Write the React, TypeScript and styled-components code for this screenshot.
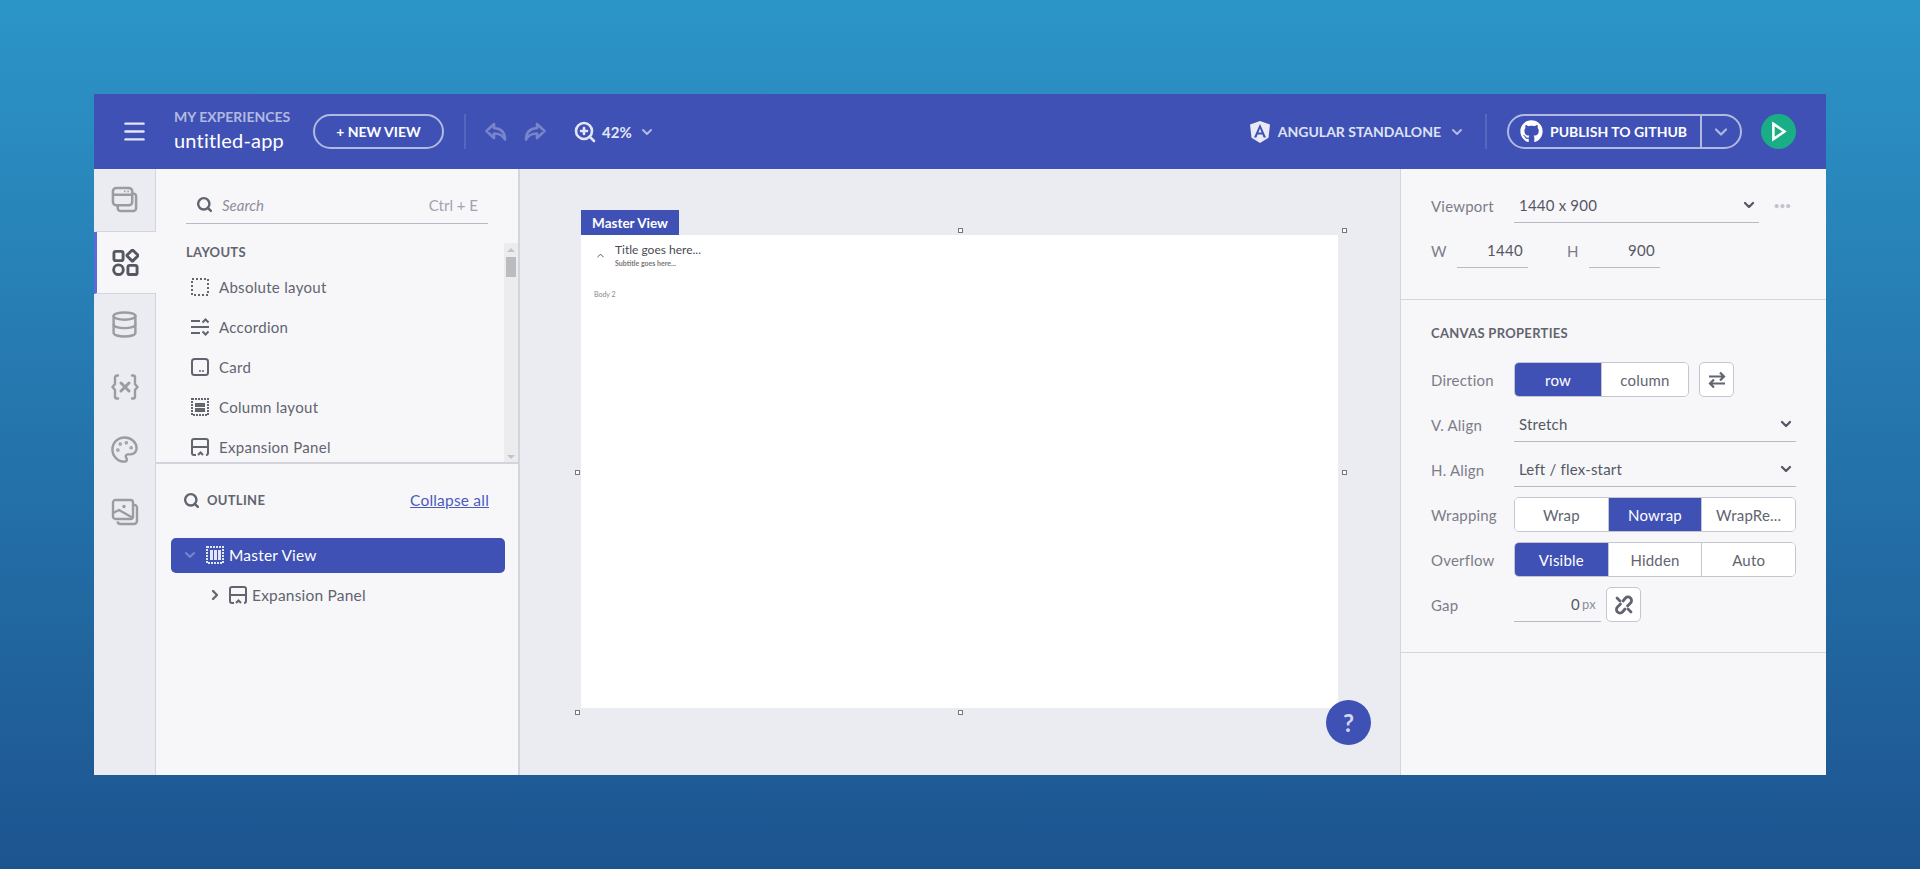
import React from 'react'
import styled, { createGlobalStyle } from 'styled-components'
import {
  ChevronDown,
  ChevronRight,
  ChevronUp,
  Database,
  Menu,
  Palette,
  Search,
  ZoomIn,
} from 'lucide-react'
import { FaGithub } from 'react-icons/fa'

const GlobalStyle = createGlobalStyle`
  html, body {
    margin: 0;
    padding: 0;
  }
  * {
    box-sizing: border-box;
  }
  body {
    font-family: 'Lato', 'Open Sans', sans-serif;
    color: #62646f;
  }
`

const Page = styled.div`
  width: 1920px;
  height: 869px;
  padding: 94px 94px 94px 94px;
  overflow: hidden;
  background: linear-gradient(180deg, #2c95c8 0%, #1d5490 100%);
`

const Window = styled.div`
  width: 1732px;
  height: 681px;
  display: flex;
  flex-direction: column;
`

const TopBar = styled.header`
  height: 75px;
  flex: none;
  display: flex;
  align-items: center;
  background: #3f51b5;
  color: #fff;
`

const MenuButton = styled.div`
  width: 80px;
  display: flex;
  justify-content: center;
  color: #e3e6f5;
`

const Project = styled.div`
  width: 139px;
  display: flex;
  flex-direction: column;
  gap: 2px;
  margin-top: -3px;
`

const ProjectLabel = styled.span`
  font-size: 14px;
  line-height: 18px;
  font-weight: 700;
  color: #b2b9e1;
`

const ProjectName = styled.span`
  font-size: 20px;
  line-height: 24px;
  letter-spacing: 0.2px;
`

const OutlineButton = styled.div`
  width: 131px;
  height: 35px;
  border: 2px solid #b2b9e1;
  border-radius: 18px;
  display: flex;
  align-items: center;
  justify-content: center;
  font-size: 14px;
  font-weight: 700;
`

const Divider = styled.div<{ $gap: number }>`
  width: 2px;
  height: 35px;
  margin: 0 ${p => p.$gap}px;
  background: #5766bd;
`

const HistoryIcons = styled.div`
  width: 63px;
  margin-left: -2px;
  display: flex;
  justify-content: space-between;
  color: #7885cb;
`

const Zoom = styled.div`
  margin-left: 26px;
  display: flex;
  align-items: center;
  gap: 5px;
  font-size: 15px;
  font-weight: 700;
  color: #e3e6f5;
`

const TopRight = styled.div`
  margin-left: auto;
  display: flex;
  align-items: center;
`

const Framework = styled.div`
  display: flex;
  align-items: center;
  gap: 8px;
  font-size: 14px;
  font-weight: 700;
  color: #dfe2f3;
`

const PublishButton = styled.div`
  width: 235px;
  height: 35px;
  border: 2px solid #b2b9e1;
  border-radius: 18px;
  display: flex;
  align-items: center;
  font-size: 14px;
  font-weight: 700;
`

const PublishLabel = styled.div`
  flex: 1;
  height: 100%;
  padding-left: 11px;
  display: flex;
  align-items: center;
  gap: 7px;
  border-right: 2px solid #b2b9e1;
`

const PublishCaret = styled.div`
  width: 38px;
  display: flex;
  justify-content: center;
  color: #b2b9e1;
`

const RunButton = styled.div`
  width: 35px;
  height: 35px;
  margin: 0 30px 0 19px;
  border-radius: 50%;
  background: #19ae85;
  display: flex;
  align-items: center;
  justify-content: center;
  color: #fff;
`

const Body = styled.div`
  flex: 1;
  min-height: 0;
  display: flex;
`

const Rail = styled.nav`
  width: 62px;
  flex: none;
  background: #ebecf1;
  border-right: 1px solid #d4d5dc;
`

const RailTab = styled.div<{ $active?: boolean; $underline?: boolean }>`
  height: 62.5px;
  display: flex;
  align-items: center;
  justify-content: center;
  color: ${p => (p.$active ? '#555763' : '#9a9ba3')};
  background: ${p => (p.$active ? '#f7f7fa' : 'transparent')};
  border-left: 3px solid ${p => (p.$active ? '#5a6bd8' : 'transparent')};
  border-bottom: 1px solid ${p => (p.$underline ? '#d4d5dc' : 'transparent')};
  margin-right: ${p => (p.$active ? '-1px' : '0')};
  padding-right: 3px;
`

const LeftPanel = styled.aside`
  width: 364px;
  flex: none;
  display: flex;
  flex-direction: column;
  background: #f7f7fa;
  border-right: 2px solid #d4d5dc;
`

const Palettes = styled.section`
  height: 295px;
  flex: none;
  overflow: hidden;
  border-bottom: 2px solid #d4d5dc;
`

const SearchBox = styled.div`
  height: 38px;
  margin: 17px 30px 0 30px;
  padding: 0 10px;
  display: flex;
  align-items: center;
  gap: 9px;
  border-bottom: 1px solid #b9bac5;
  color: #62646f;
`

const SearchText = styled.span`
  flex: 1;
  font-size: 15px;
  font-style: italic;
  color: #8d8e9c;
`

const Shortcut = styled.span`
  font-size: 15px;
  color: #a1a2ad;
`

const PaletteBody = styled.div`
  display: flex;
  height: 240px;
`

const PaletteList = styled.div`
  flex: 1;
  padding: 19px 0 0 30px;
`

const SectionTitle = styled.div`
  font-size: 13px;
  line-height: 18px;
  font-weight: 700;
  letter-spacing: 0.3px;
  color: #62646f;
`

const ListTitle = styled(SectionTitle)`
  margin-bottom: 6px;
`

const PaletteItem = styled.div`
  height: 40px;
  margin-left: 5px;
  display: flex;
  align-items: center;
  gap: 10px;
  font-size: 15px;
  letter-spacing: 0.3px;
  color: #62646f;
`

const ScrollTrack = styled.div`
  position: relative;
  width: 14px;
  margin-top: 19px;
  background: #ececee;
  &::before,
  &::after {
    content: '';
    position: absolute;
    left: 3px;
    border-left: 4px solid transparent;
    border-right: 4px solid transparent;
  }
  &::before {
    top: 5px;
    border-bottom: 4px solid #c4c4c8;
  }
  &::after {
    bottom: 5px;
    border-top: 4px solid #c4c4c8;
  }
`

const ScrollThumb = styled.div`
  position: absolute;
  top: 14px;
  left: 2px;
  width: 10px;
  height: 20px;
  background: #bcbcc0;
`

const OutlineSection = styled.section`
  flex: 1;
  padding: 25px 13px 0 15px;
`

const OutlineHeader = styled.div`
  display: flex;
  align-items: center;
  padding: 0 16px 0 12px;
  height: 22px;
  gap: 7px;
  margin-bottom: 27px;
`

const OutlineTitle = styled(SectionTitle)`
  flex: 1;
`

const CollapseLink = styled.a`
  font-size: 15.5px;
  letter-spacing: 0.2px;
  color: #4a5bbb;
  text-decoration: underline;
`

const TreeRow = styled.div<{ $selected?: boolean; $indent: number }>`
  height: 35px;
  margin-bottom: 5px;
  padding-left: ${p => p.$indent}px;
  padding-bottom: 2px;
  display: flex;
  align-items: center;
  gap: 5px;
  border-radius: 5px;
  font-size: 15.5px;
  letter-spacing: 0.2px;
  background: ${p => (p.$selected ? '#3f51b5' : 'transparent')};
  color: ${p => (p.$selected ? '#fff' : '#62646f')};
`

const Workspace = styled.main`
  position: relative;
  flex: 1;
  background: #ebecf1;
  padding: 41px 0 0 61px;
`

const CanvasTab = styled.div`
  width: 98px;
  height: 25px;
  background: #3f51b5;
  color: #fff;
  font-size: 13.5px;
  font-weight: 700;
  display: flex;
  align-items: center;
  justify-content: center;
`

const Canvas = styled.div`
  position: relative;
  width: 757px;
  height: 473px;
  background: #fff;
`

const Handle = styled.span<{ $x: string; $y: string }>`
  position: absolute;
  left: ${p => p.$x};
  top: ${p => p.$y};
  width: 5px;
  height: 5px;
  margin: -2.5px 0 0 -2.5px;
  background: #fff;
  border: 1px solid #777;
`

const PanelHeader = styled.div`
  display: flex;
  align-items: center;
  padding: 7px 0 0 14px;
  gap: 9px;
  color: #444;
`

const PanelTitle = styled.div`
  font-size: 12px;
  line-height: 16px;
  color: #4a4a55;
`

const PanelSubtitle = styled.div`
  font-size: 7px;
  line-height: 10px;
  font-weight: 700;
  color: #777;
`

const PanelBody = styled.div`
  margin: 22px 0 0 13px;
  font-size: 7px;
  color: #888;
`

const HelpButton = styled.div`
  position: absolute;
  left: 806px;
  bottom: 30px;
  width: 45px;
  height: 45px;
  border-radius: 50%;
  background: #3f51b5;
  color: #d5d9f0;
  display: flex;
  align-items: center;
  justify-content: center;
  font-size: 24px;
  font-weight: 700;
`

const RightPanel = styled.aside`
  width: 426px;
  flex: none;
  background: #f7f7fa;
  border-left: 1px solid #d4d5dc;
`

const ViewportSection = styled.section`
  height: 131px;
  padding: 19px 30px 0 30px;
  border-bottom: 1px solid #d4d5dc;
`

const PropertySection = styled.section`
  height: 353px;
  padding: 24px 30px 0 30px;
  border-bottom: 1px solid #d4d5dc;
`

const PropRow = styled.div<{ $mb?: number }>`
  height: 35px;
  display: flex;
  align-items: center;
  margin-bottom: ${p => p.$mb ?? 10}px;
`

const PropLabel = styled.span<{ $w?: number }>`
  width: ${p => p.$w ?? 83}px;
  flex: none;
  font-size: 15px;
  letter-spacing: 0.2px;
  color: #7c7d89;
`

const SelectBox = styled.div<{ $w: number }>`
  width: ${p => p.$w}px;
  height: 35px;
  padding: 0 2px 0 5px;
  display: flex;
  align-items: center;
  justify-content: space-between;
  border-bottom: 1px solid #b9bac5;
  font-size: 15px;
  letter-spacing: 0.2px;
  color: #555763;
`

const Dots = styled.span`
  margin-left: 15px;
  font-size: 9px;
  line-height: 10px;
  letter-spacing: 0.5px;
  font-weight: 700;
  color: #c2c3cb;
`

const NumberBox = styled.div<{ $w: number; $mr?: number }>`
  width: ${p => p.$w}px;
  height: 35px;
  margin-right: ${p => p.$mr ?? 0}px;
  padding-right: 5px;
  display: flex;
  align-items: center;
  justify-content: flex-end;
  border-bottom: 1px solid #b9bac5;
  font-size: 15px;
  letter-spacing: 0.3px;
  color: #555763;
`

const Unit = styled.span`
  margin-left: 2px;
  font-size: 13px;
  color: #8d8e9c;
`

const SectionHeading = styled(SectionTitle)`
  margin-bottom: 20px;
`

const Segments = styled.div<{ $w: number }>`
  width: ${p => p.$w}px;
  height: 35px;
  display: flex;
  background: #fff;
  border: 1px solid #c4c5ce;
  border-radius: 5px;
  overflow: hidden;
`

const Segment = styled.div<{ $active?: boolean }>`
  flex: 1 1 0;
  display: flex;
  align-items: center;
  justify-content: center;
  font-size: 15px;
  letter-spacing: 0.2px;
  background: ${p => (p.$active ? '#3f51b5' : '#fff')};
  color: ${p => (p.$active ? '#fff' : '#62646f')};
  & + & {
    border-left: ${p => (p.$active ? 'none' : '1px solid #c4c5ce')};
  }
`

const IconButton = styled.div<{ $ml?: number }>`
  width: 35px;
  height: 35px;
  margin-left: ${p => p.$ml ?? 10}px;
  display: flex;
  align-items: center;
  justify-content: center;
  background: #fff;
  border: 1px solid #c4c5ce;
  border-radius: 5px;
  color: #62646f;
`

const WindowsIcon = () => (
  <svg width="27" height="27" viewBox="0 0 28 28" fill="none" stroke="currentColor" strokeWidth="2.6" strokeLinejoin="round">
    <rect x="2" y="2" width="20" height="18" rx="3.5" />
    <path d="M2 9h20M22 8h1.500a2.500 2.500 0 0 1 2.500 2.500V23a3 3 0 0 1-3 3H10a3 3 0 0 1-3-3v-3" />
    <path d="M13.500 5.500h1.500M17 5.500h1.500" strokeWidth="1.800" />
  </svg>
)

const ComponentsIcon = () => (
  <svg width="27" height="27" viewBox="0 0 28 28" fill="none" stroke="currentColor" strokeWidth="3">
    <rect x="2" y="2.500" width="9.500" height="9.500" rx="2" />
    <rect x="17" y="2.500" width="8.500" height="8.500" rx="1" transform="rotate(45 21.200 6.700)" />
    <circle cx="6.700" cy="21.500" r="5" />
    <rect x="16.500" y="17" width="9.500" height="9.500" rx="2" />
  </svg>
)

const VariableIcon = () => (
  <svg width="28" height="28" viewBox="0 0 28 28" fill="none" stroke="currentColor" strokeWidth="2.400" strokeLinecap="round">
    <path d="M7 2.500H6a2 2 0 0 0-2 2V11l-2.500 3L4 17v6.500a2 2 0 0 0 2 2h1M21 2.500h1a2 2 0 0 1 2 2V11l2.500 3L24 17v6.500a2 2 0 0 1-2 2h-1" />
    <path d="M10 10l8 8M18 10l-8 8" strokeWidth="3" />
  </svg>
)

const ImagesIcon = () => (
  <svg width="28" height="28" viewBox="0 0 28 28" fill="none" stroke="currentColor" strokeWidth="2.400" strokeLinejoin="round">
    <rect x="2" y="2" width="20" height="19" rx="2.500" />
    <path d="M2 15l6-3 14 8M22 7h1.500A2.500 2.500 0 0 1 26 9.500V23a3 3 0 0 1-3 3H9a3 3 0 0 1-2.500-2.500" />
    <circle cx="13" cy="8.500" r="1.700" fill="currentColor" stroke="none" />
  </svg>
)

const AbsoluteIcon = () => (
  <svg width="18" height="18" viewBox="0 0 18 18" fill="none" stroke="currentColor" strokeWidth="2" strokeDasharray="2 2" shapeRendering="crispEdges">
    <rect x="1" y="1" width="16" height="16" />
  </svg>
)

const AccordionIcon = () => (
  <svg width="18" height="18" viewBox="0 0 18 18" fill="none" stroke="currentColor" strokeWidth="2">
    <path d="M0 3h9M0 9h18M0 15h9M11.500 4.500l3-3 3 3M11.500 13.500l3 3 3-3" />
  </svg>
)

const CardIcon = () => (
  <svg width="18" height="18" viewBox="0 0 18 18" fill="none" stroke="currentColor" strokeWidth="2">
    <rect x="1" y="1" width="16" height="16" rx="2.500" />
    <path d="M8 13h2M11 13h2" strokeWidth="1.500" />
  </svg>
)

const ColumnIcon = () => (
  <svg width="18" height="18" viewBox="0 0 18 18" fill="none" stroke="currentColor" shapeRendering="crispEdges">
    <rect x="1" y="1" width="16" height="16" strokeWidth="2" strokeDasharray="2 1" />
    <path d="M4 6.500h10M4 11.500h10" strokeWidth="4" />
  </svg>
)

const ExpansionIcon = () => (
  <svg width="18" height="18" viewBox="0 0 18 18" fill="none" stroke="currentColor" strokeWidth="2">
    <path d="M5 17H3a2 2 0 0 1-2-2V3a2 2 0 0 1 2-2h12a2 2 0 0 1 2 2v12a2 2 0 0 1-2 2M1 9h16" />
    <path d="M7 17l2.500-2.500L12 17" />
  </svg>
)

const MasterIcon = () => (
  <svg width="18" height="18" viewBox="0 0 18 18" fill="none" stroke="#e3e6f5" shapeRendering="crispEdges">
    <rect x="1" y="1" width="16" height="16" strokeWidth="2" strokeDasharray="2 1" />
    <path d="M5.500 4v10M9.500 4v10M13 4v10" strokeWidth="3" />
  </svg>
)

const AngularIcon = () => (
  <svg width="20" height="22" viewBox="0 0 20 22">
    <path fill="#e8eaf6" fillRule="evenodd" d="M10 0l10 3.500-1.500 13.200L10 22l-8.500-5.300L0 3.500zM10 3L4 16.500h2.400l1.200-3h4.800l1.200 3H16zM10 7.500l1.600 4H8.400z" />
  </svg>
)

const ReplyIcon = ({ flip }: { flip?: boolean }) => (
  <svg width="24" height="24" viewBox="0 0 24 24" fill="none" stroke="currentColor" strokeWidth="2.600" strokeLinejoin="round" transform={flip ? 'scale(-1 1)' : undefined}>
    <path d="M10 4L2.500 11l7.500 7v-4.500c5 0 8.500 1.500 11 6 0-7-3.500-11-11-11.500z" />
  </svg>
)

const RunIcon = () => (
  <svg width="17" height="21" viewBox="0 0 20 24" fill="none" stroke="currentColor" strokeWidth="3" strokeLinejoin="miter">
    <path d="M4 3l13 9-13 9z" />
  </svg>
)

const SwapIcon = () => (
  <svg width="18" height="18" viewBox="0 0 18 18" fill="none" stroke="currentColor" strokeWidth="2.200">
    <path d="M1 5.500h15M12 1.500l4 4-4 4" />
    <path d="M17 12.500H2M6 8.500l-4 4 4 4" />
  </svg>
)

const UnlinkIcon = () => (
  <svg width="22" height="22" viewBox="0 0 22 22" fill="none" stroke="currentColor" strokeWidth="2.800" strokeLinecap="round" strokeLinejoin="round">
    <path d="M10 7l2.500-3a3.500 3.500 0 0 1 5 5L14.500 12" />
    <path d="M12 15l-2.500 3a3.500 3.500 0 0 1-5-5L7.500 10" />
    <path d="M4 4l3 3M15 15l3 3" />
  </svg>
)

const railTabs = [
  { key: 'screens', icon: <WindowsIcon />, underline: true },
  { key: 'components', icon: <ComponentsIcon />, active: true, underline: true },
  { key: 'data', icon: <Database size={29} strokeWidth={2} /> },
  { key: 'variables', icon: <VariableIcon /> },
  { key: 'theme', icon: <Palette size={29} strokeWidth={2} /> },
  { key: 'assets', icon: <ImagesIcon /> },
]

const paletteItems = [
  { name: 'Absolute layout', icon: <AbsoluteIcon /> },
  { name: 'Accordion', icon: <AccordionIcon /> },
  { name: 'Card', icon: <CardIcon /> },
  { name: 'Column layout', icon: <ColumnIcon /> },
  { name: 'Expansion Panel', icon: <ExpansionIcon /> },
]

const handles = [
  ['50.1%', '-5px'],
  ['100.8%', '-5px'],
  ['-0.5%', '50.3%'],
  ['100.8%', '50.3%'],
  ['-0.5%', '101%'],
  ['50.1%', '101%'],
  ['100.8%', '101%'],
]

const App: React.FC = () => {
  return (
    <Page>
      <GlobalStyle />
      <Window>
        <TopBar>
          <MenuButton>
            <Menu size={27} strokeWidth={2.2} />
          </MenuButton>
          <Project>
            <ProjectLabel>MY EXPERIENCES</ProjectLabel>
            <ProjectName>untitled-app</ProjectName>
          </Project>
          <OutlineButton>+ NEW VIEW</OutlineButton>
          <Divider $gap={20} />
          <HistoryIcons>
            <ReplyIcon />
            <ReplyIcon flip />
          </HistoryIcons>
          <Zoom>
            <ZoomIn size={24} strokeWidth={2.6} />
            42%
            <ChevronDown size={16} strokeWidth={3} style={{ marginLeft: 2, color: '#b2b9e1' }} />
          </Zoom>
          <TopRight>
            <Framework>
              <AngularIcon />
              ANGULAR STANDALONE
              <ChevronDown size={16} strokeWidth={3} style={{ color: '#b2b9e1' }} />
            </Framework>
            <Divider $gap={20} />
            <PublishButton>
              <PublishLabel>
                <FaGithub size={23} />
                PUBLISH TO GITHUB
              </PublishLabel>
              <PublishCaret>
                <ChevronDown size={20} strokeWidth={2.6} />
              </PublishCaret>
            </PublishButton>
            <RunButton>
              <RunIcon />
            </RunButton>
          </TopRight>
        </TopBar>

        <Body>
          <Rail>
            {railTabs.map(tab => (
              <RailTab key={tab.key} $active={tab.active} $underline={tab.underline}>
                {tab.icon}
              </RailTab>
            ))}
          </Rail>

          <LeftPanel>
            <Palettes>
              <SearchBox>
                <Search size={17} strokeWidth={3.4} />
                <SearchText>Search</SearchText>
                <Shortcut>Ctrl + E</Shortcut>
              </SearchBox>
              <PaletteBody>
                <PaletteList>
                  <ListTitle>LAYOUTS</ListTitle>
                  {paletteItems.map(item => (
                    <PaletteItem key={item.name}>
                      {item.icon}
                      {item.name}
                    </PaletteItem>
                  ))}
                </PaletteList>
                <ScrollTrack>
                  <ScrollThumb />
                </ScrollTrack>
              </PaletteBody>
            </Palettes>
            <OutlineSection>
              <OutlineHeader>
                <Search size={17} strokeWidth={3.4} />
                <OutlineTitle>OUTLINE</OutlineTitle>
                <CollapseLink>Collapse all</CollapseLink>
              </OutlineHeader>
              <TreeRow $selected $indent={11}>
                <ChevronDown size={16} strokeWidth={3} color="#7885cb" style={{ marginRight: 3 }} />
                <MasterIcon />
                Master View
              </TreeRow>
              <TreeRow $indent={36}>
                <ChevronRight size={16} strokeWidth={3.4} style={{ marginRight: 1 }} />
                <ExpansionIcon />
                Expansion Panel
              </TreeRow>
            </OutlineSection>
          </LeftPanel>

          <Workspace>
            <CanvasTab>Master View</CanvasTab>
            <Canvas>
              {handles.map(([x, y]) => (
                <Handle key={x + y} $x={x} $y={y} />
              ))}
              <PanelHeader>
                <ChevronUp size={11} strokeWidth={2} />
                <div>
                  <PanelTitle>Title goes here...</PanelTitle>
                  <PanelSubtitle>Subtitle goes here...</PanelSubtitle>
                </div>
              </PanelHeader>
              <PanelBody>Body 2</PanelBody>
            </Canvas>
            <HelpButton>?</HelpButton>
          </Workspace>

          <RightPanel>
            <ViewportSection>
              <PropRow>
                <PropLabel>Viewport</PropLabel>
                <SelectBox $w={245}>
                  1440 x 900
                  <ChevronDown size={16} strokeWidth={3.4} />
                </SelectBox>
                <Dots>•••</Dots>
              </PropRow>
              <PropRow>
                <PropLabel $w={26}>W</PropLabel>
                <NumberBox $w={71} $mr={39}>1440</NumberBox>
                <PropLabel $w={22}>H</PropLabel>
                <NumberBox $w={71}>900</NumberBox>
              </PropRow>
            </ViewportSection>

            <PropertySection>
              <SectionHeading>CANVAS PROPERTIES</SectionHeading>
              <PropRow>
                <PropLabel>Direction</PropLabel>
                <Segments $w={175}>
                  <Segment $active>row</Segment>
                  <Segment>column</Segment>
                </Segments>
                <IconButton>
                  <SwapIcon />
                </IconButton>
              </PropRow>
              <PropRow>
                <PropLabel>V. Align</PropLabel>
                <SelectBox $w={283}>
                  Stretch
                  <ChevronDown size={16} strokeWidth={3.4} />
                </SelectBox>
              </PropRow>
              <PropRow>
                <PropLabel>H. Align</PropLabel>
                <SelectBox $w={283}>
                  Left / flex-start
                  <ChevronDown size={16} strokeWidth={3.4} />
                </SelectBox>
              </PropRow>
              <PropRow>
                <PropLabel>Wrapping</PropLabel>
                <Segments $w={283}>
                  <Segment>Wrap</Segment>
                  <Segment $active>Nowrap</Segment>
                  <Segment>WrapRe...</Segment>
                </Segments>
              </PropRow>
              <PropRow>
                <PropLabel>Overflow</PropLabel>
                <Segments $w={283}>
                  <Segment $active>Visible</Segment>
                  <Segment>Hidden</Segment>
                  <Segment>Auto</Segment>
                </Segments>
              </PropRow>
              <PropRow>
                <PropLabel>Gap</PropLabel>
                <NumberBox $w={87}>
                  0<Unit>px</Unit>
                </NumberBox>
                <IconButton $ml={5}>
                  <UnlinkIcon />
                </IconButton>
              </PropRow>
            </PropertySection>
          </RightPanel>
        </Body>
      </Window>
    </Page>
  )
}

export default App
